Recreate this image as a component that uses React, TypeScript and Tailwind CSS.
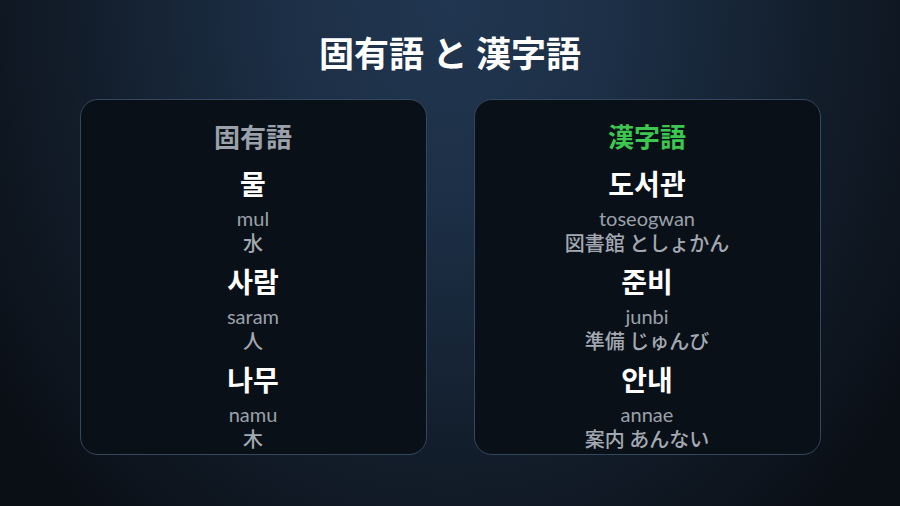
import React from "react";

type Item = { ko: string; rom: string; ja: string };

const native: Item[] = [
  { ko: "물", rom: "mul", ja: "水" },
  { ko: "사람", rom: "saram", ja: "人" },
  { ko: "나무", rom: "namu", ja: "木" },
];

const sino: Item[] = [
  { ko: "도서관", rom: "toseogwan", ja: "図書館 としょかん" },
  { ko: "준비", rom: "junbi", ja: "準備 じゅんび" },
  { ko: "안내", rom: "annae", ja: "案内 あんない" },
];

function Card({ title, green, items }: { title: string; green?: boolean; items: Item[] }) {
  return (
    <div className="w-[347px] h-[356px] rounded-[18px] border border-[#34475d] bg-[#0a1017] pt-[18px] flex flex-col items-center">
      <div
        className={
          "text-[26px] leading-[36px] font-bold font-['Noto_Sans_CJK_JP',sans-serif] " +
          (green ? "text-[#3cc850]" : "text-[#9aa1ab]")
        }
      >
        {title}
      </div>
      <div className="mt-[11px] flex flex-col items-center gap-[7px]">
        {items.map((it) => (
          <div key={it.rom} className="flex flex-col items-center">
            <div className="text-[28px] leading-[36px] font-bold text-white font-['Noto_Sans_CJK_KR',sans-serif]">
              {it.ko}
            </div>
            <div className="mt-[5px] text-[20px] leading-[24px] text-[#9aa1ab] font-['Lato',sans-serif]">
              {it.rom}
            </div>
            <div className="text-[20px] leading-[26px] font-medium text-[#a3a9b2] font-['Noto_Sans_CJK_JP',sans-serif]">
              {it.ja}
            </div>
          </div>
        ))}
      </div>
    </div>
  );
}

export default function App() {
  return (
    <div className="w-[900px] h-[506px] overflow-hidden bg-[radial-gradient(ellipse_62%_135%_at_50%_0%,#213650_0%,#1c2f46_30%,#131e2c_65%,#0a0f16_100%)] flex flex-col items-center pt-[32px]">
      <h1 className="text-[35px] leading-[42px] font-bold text-white font-['Lato','Noto_Sans_CJK_JP',sans-serif]">
        固有語 と 漢字語
      </h1>
      <div className="mt-[25px] flex gap-[47px]">
        <Card title="固有語" items={native} />
        <Card title="漢字語" green items={sino} />
      </div>
    </div>
  );
}
